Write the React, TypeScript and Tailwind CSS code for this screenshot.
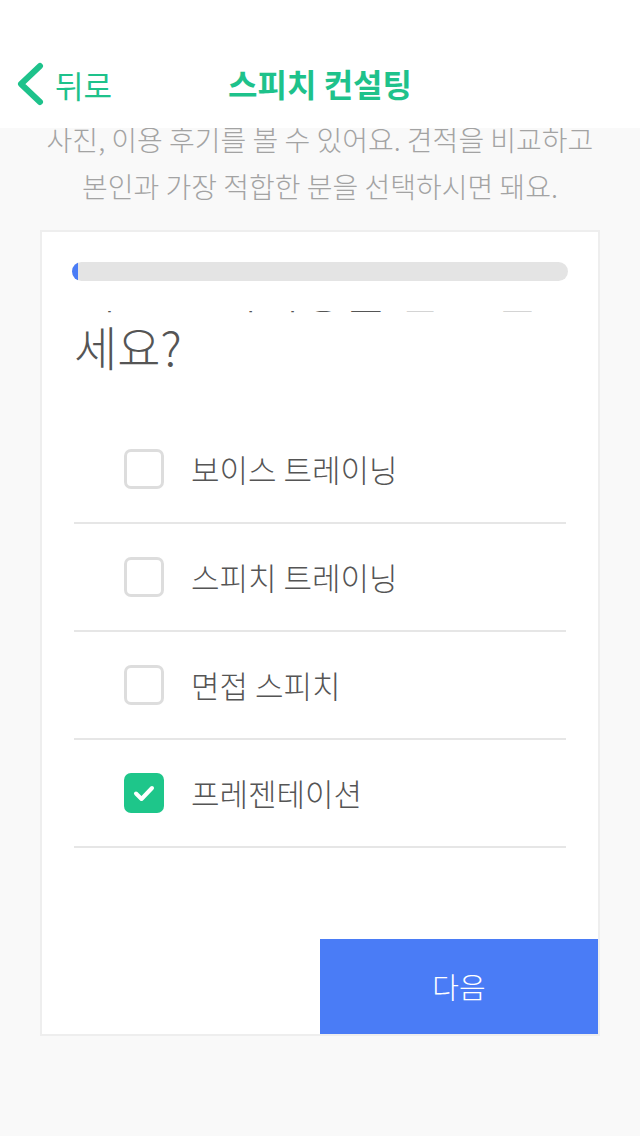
import React from "react";

const FONT = { fontFamily: '"Noto Sans CJK KR", "Noto Sans", sans-serif' };

const options = [
  { label: "보이스 트레이닝", checked: false },
  { label: "스피치 트레이닝", checked: false },
  { label: "면접 스피치", checked: false },
  { label: "프레젠테이션", checked: true },
];

function Checkbox({ checked }: { checked: boolean }) {
  if (checked) {
    return (
      <div className="w-[40px] h-[40px] rounded-[7px] bg-[#1ec68a] flex items-center justify-center shrink-0">
        <svg width="24" height="24" viewBox="0 0 24 24" fill="none">
          <path d="M4 12.5 L9.5 18 L20 7" stroke="white" strokeWidth="4" strokeLinecap="round" strokeLinejoin="round" />
        </svg>
      </div>
    );
  }
  return <div className="w-[40px] h-[40px] rounded-[7px] border-[3px] border-[#dddddd] bg-white shrink-0" />;
}

export default function App() {
  return (
    <div className="w-[640px] h-[1136px] bg-[#f9f9f9] flex flex-col overflow-hidden" style={FONT}>
      {/* Header */}
      <div className="h-[128px] bg-white pt-[40px] shrink-0 grid grid-cols-[1fr_auto_1fr] items-center">
        <div className="flex items-center pl-[15px] gap-[10px] text-[#1ec28b]">
          <svg width="30" height="44" viewBox="0 0 30 44" fill="none">
            <path d="M25 4 L6 22 L25 40" stroke="#1ec28b" strokeWidth="6" strokeLinecap="round" strokeLinejoin="round" />
          </svg>
          <span className="text-[31px] leading-none">뒤로</span>
        </div>
        <div className="text-[32px] font-bold text-[#1ec28b] leading-none -mt-[3px]">스피치 컨설팅</div>
        <div />
      </div>

      {/* Subtitle (scrolled, clipped under header) */}
      <div className="h-[102px] overflow-hidden shrink-0">
        <div className="-mt-[12px] text-center text-[28px] leading-[47px] text-[#a3a3a3] font-light">
          사진, 이용 후기를 볼 수 있어요. 견적을 비교하고
          <br />
          본인과 가장 적합한 분을 선택하시면 돼요.
        </div>
      </div>

      {/* Card */}
      <div className="mx-[40px] h-[806px] bg-white border-2 border-[#eeeeee] flex flex-col shrink-0">
        <div className="px-[30px] pt-[30px]">
          <div className="h-[19px] rounded-full bg-[#e4e4e4] overflow-hidden">
            <div className="h-full w-[6px] bg-[#4a7cf6]" />
          </div>
        </div>

        <div className="mt-[30px] mx-[32px] h-[75px] overflow-hidden">
          <div className="-mt-[52px] text-[47px] leading-[58px] text-[#555555] font-light whitespace-nowrap">
            어떤 트레이닝을 받고 싶으
            <br />
            세요?
          </div>
        </div>

        <div className="mt-[30px] mx-[32px] flex flex-col">
          {options.map((o) => (
            <div key={o.label} className="h-[108px] border-b-2 border-[#e6e6e6] flex items-center pl-[50px] gap-[27px]">
              <Checkbox checked={o.checked} />
              <span className="text-[31px] text-[#555555] font-light">{o.label}</span>
            </div>
          ))}
        </div>

        <div className="mt-auto flex justify-end">
          <button className="w-[278px] h-[95px] bg-[#4a7cf6] text-white text-[29px] font-light">다음</button>
        </div>
      </div>
    </div>
  );
}
